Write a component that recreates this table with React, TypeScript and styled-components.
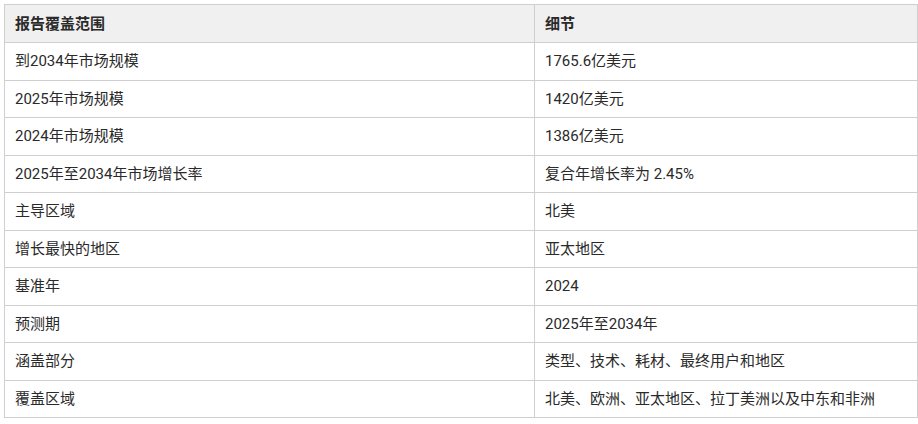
import React from 'react';
import styled, { createGlobalStyle } from 'styled-components';

const GlobalStyle = createGlobalStyle`
  body {
    margin: 0;
    background: #fff;
    font-family: Roboto, "Noto Sans CJK SC", sans-serif;
  }
`;

const rows: [string, string][] = [
  ['到2034年市场规模', '1765.6亿美元'],
  ['2025年市场规模', '1420亿美元'],
  ['2024年市场规模', '1386亿美元'],
  ['2025年至2034年市场增长率', '复合年增长率为 2.45%'],
  ['主导区域', '北美'],
  ['增长最快的地区', '亚太地区'],
  ['基准年', '2024'],
  ['预测期', '2025年至2034年'],
  ['涵盖部分', '类型、技术、耗材、最终用户和地区'],
  ['覆盖区域', '北美、欧洲、亚太地区、拉丁美洲以及中东和非洲'],
];

const App = () => {
  return (
    <Page>
      <GlobalStyle />
      <Table>
        <thead>
          <tr>
            <Th>报告覆盖范围</Th>
            <Th>细节</Th>
          </tr>
        </thead>
        <tbody>
          {rows.map(([k, v]) => (
            <tr key={k}>
              <Td>{k}</Td>
              <Td>{v}</Td>
            </tr>
          ))}
        </tbody>
      </Table>
    </Page>
  );
};

export default App;

const Page = styled.div`
  padding: 4px 0 0 4px;
`;

const Table = styled.table`
  width: 914px;
  border-collapse: collapse;
  table-layout: fixed;
  color: #2a2a2a;
  font-size: 15px;
  line-height: 18px;

  th:first-child,
  td:first-child {
    width: 509px;
  }
`;

const Th = styled.th`
  height: 37px;
  padding: 0 10px;
  text-align: left;
  font-weight: 700;
  background: #f0f0f0;
  border: 1px solid #cfcfcf;
`;

const Td = styled.td`
  height: 36.5px;
  padding: 0 10px;
  border: 1px solid #cfcfcf;
`;
